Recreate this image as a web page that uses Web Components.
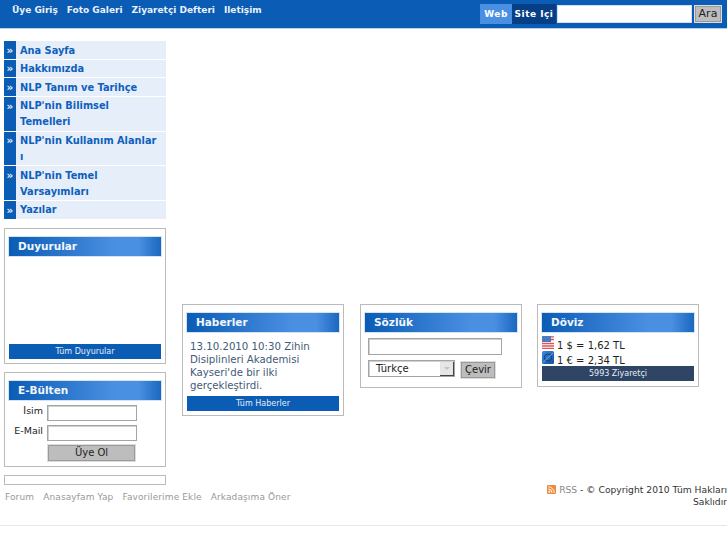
<!DOCTYPE html>
<html lang="tr">
<head>
<meta charset="utf-8">
<title>NLP</title>
<style>
  html, body { margin: 0; height: 545px; overflow: hidden; background: #fff; }
  body { font-family: "DejaVu Sans", sans-serif; font-size: 11px; color: #222; }
</style>
</head>
<body>
<x-page></x-page>

<script>
const boxInput = `
  input {
    box-sizing: border-box; display: block; margin: 0; padding: 1px 3px;
    border: 1px solid #a4a4a4; background: #fff; border-radius: 0;
    font: 10px "DejaVu Sans", sans-serif; outline: 0;
    box-shadow: inset 1px 1px 0 #d0d0d0;
  }
  .btn {
    box-sizing: border-box; display: block; margin: 0; padding: 0;
    background: #bdbdbd; border: 1px solid #ddd; outline: 1px solid #9a9a9a; outline-offset: -2px;
    color: #222; font: 10px "DejaVu Sans", sans-serif; text-align: center;
  }
`;

class XTopBar extends HTMLElement {
  constructor() {
    super();
    this.attachShadow({ mode: 'open' }).innerHTML = `
      <style>
        ${boxInput}
        :host { display: flex; box-sizing: border-box; height: 29px; background: #0a5cb5; border-bottom: 1px solid #b9cfe9; justify-content: space-between; }
        nav { display: flex; gap: 9px; padding: 4px 0 0 12px; }
        a { color: #eaf1fa; font-weight: bold; font-size: 9px; line-height: 13px; text-decoration: none; }
        form { display: flex; margin: 0 5px 0 0; padding-top: 4px; height: 20px; }
        .tab { box-sizing: border-box; height: 20px; line-height: 20px; font-weight: bold; font-size: 9px; letter-spacing: .5px; color: #fff; text-align: center; }
        .web { width: 32px; background: #4a90e2; }
        .site { width: 44px; background: #063f85; }
        input { width: 135px; height: 18px; margin: 1px 0 0 1px; box-shadow: none; border: 1px solid #d7e0ea; }
        .btn { width: 28px; height: 18px; margin: 1px 0 0 2px; line-height: 15px; font-size: 11px; }
      </style>
      <nav><a>Üye Giriş</a><a>Foto Galeri</a><a>Ziyaretçi Defteri</a><a>Iletişim</a></nav>
      <form><div class="tab web">Web</div><div class="tab site">Site Içi</div><input type="text"><div class="btn">Ara</div></form>
    `;
  }
}

class XMenuItem extends HTMLElement {
  constructor() {
    super();
    this.attachShadow({ mode: 'open' }).innerHTML = `
      <style>
        :host { display: flex; background: #e6eef9; }
        .mark { flex: none; width: 12px; background: #0a5cb5; color: #e6eef9; font-size: 10.5px; font-weight: bold; line-height: 16px; text-align: center; padding-top: .83px; }
        .label { padding: 1.5px 0 .16px 4px; color: #0d60bd; font-weight: bold; font-size: 9.8px; line-height: 16px; }
      </style>
      <div class="mark">»</div><div class="label"><slot></slot></div>
    `;
  }
}

class XSideMenu extends HTMLElement {
  constructor() {
    super();
    this.attachShadow({ mode: 'open' }).innerHTML = `
      <style>:host { display: flex; flex-direction: column; gap: 1px; }</style>
      <slot></slot>
    `;
  }
}

class XPanel extends HTMLElement {
  constructor() {
    super();
    this.attachShadow({ mode: 'open' }).innerHTML = `
      <style>
        :host { display: block; box-sizing: border-box; border: 1px solid #bbb; padding: 7px 4px 4px; background: #fff; }
        h3 {
          margin: 0 -1px; box-sizing: border-box; height: 21px; padding-left: 9px; line-height: 19px;
          border: 1px solid #d5e3f5; color: #f2f6fb; font-size: 10.5px; font-weight: bold;
          background: linear-gradient(90deg, #0a5cb5 0%, #4a90e2 70%, #4a90e2 85%, #1a68c0 100%);
        }
      </style>
      <h3>${this.getAttribute('heading') || ''}</h3>
      <slot></slot>
    `;
  }
}

class XMoreBar extends HTMLElement {
  constructor() {
    super();
    this.attachShadow({ mode: 'open' }).innerHTML = `
      <style>
        :host { display: block; height: 15px; background: var(--bar, #0a5cb5); color: #e8eef7; font-size: 8px; line-height: 15px; text-align: center; }
      </style>
      <slot></slot>
    `;
  }
}

class XNewsletter extends HTMLElement {
  constructor() {
    super();
    this.attachShadow({ mode: 'open' }).innerHTML = `
      <style>
        ${boxInput}
        :host { display: grid; grid-template-columns: 34px 90px; column-gap: 4px; row-gap: 4px; padding-top: 4px; font-size: 9.5px; color: #222; }
        label { text-align: right; line-height: 13px; white-space: nowrap; margin-top: -1px; }
        input { width: 90px; height: 16px; }
        .btn { grid-column: 2; width: 89px; height: 18px; line-height: 16px; margin-top: -1px; }
      </style>
      <label>İsim</label><input type="text">
      <label>E-Mail</label><input type="text">
      <div class="btn">Üye Ol</div>
    `;
  }
}

class XDictionary extends HTMLElement {
  constructor() {
    super();
    this.attachShadow({ mode: 'open' }).innerHTML = `
      <style>
        ${boxInput}
        :host { display: flex; flex-wrap: wrap; gap: 5px; padding: 5px 3px 0; }
        input { width: 134px; height: 17px; flex: none; }
        .select { position: relative; box-sizing: border-box; width: 87px; height: 17px; border: 1px solid #a4a4a4; box-shadow: inset 1px 1px 0 #d0d0d0; padding-left: 7px; font-size: 10px; line-height: 15px; }
        .arrow { position: absolute; right: 0; top: 1px; width: 14px; height: 14px; background: #e6e6e6; border-right: 1px solid #444; border-bottom: 1px solid #444; box-sizing: border-box; }
        .arrow::after { content: ""; position: absolute; left: 4px; top: 5px; border: 3px solid transparent; border-top: 3px solid #c4c4c4; }
        .btn { width: 36px; height: 18px; line-height: 16px; margin-top: 1px; }
      </style>
      <input type="text">
      <div class="select">Türkçe<span class="arrow"></span></div>
      <div class="btn">Çevir</div>
    `;
  }
}

class XRate extends HTMLElement {
  constructor() {
    super();
    this.attachShadow({ mode: 'open' }).innerHTML = `
      <style>
        :host { display: flex; gap: 3px; height: 15px; font-size: 10px; line-height: 15px; color: #222; }
        .t { padding-top: 2px; }
        ::slotted(svg) { flex: none; }
      </style>
      <slot name="flag"></slot><div class="t"><slot></slot></div>
    `;
  }
}

class XFooter extends HTMLElement {
  constructor() {
    super();
    this.attachShadow({ mode: 'open' }).innerHTML = `
      <style>
        :host { display: block; box-sizing: border-box; }
        .links { display: flex; gap: 9px; color: #999; font-size: 9px; letter-spacing: .12px; line-height: 11px; }
      </style>
      <div class="links"><span>Forum</span><span>Anasayfam Yap</span><span>Favorilerime Ekle</span><span>Arkadaşıma Öner</span></div>
    `;
  }
}

class XPage extends HTMLElement {
  constructor() {
    super();
    this.attachShadow({ mode: 'open' }).innerHTML = `
      <style>
        :host { display: block; position: relative; width: 727px; height: 545px; overflow: hidden; }
        .main { display: flex; padding: 12px 0 0 4px; }
        .left { flex: none; width: 162px; display: flex; flex-direction: column; }
        x-side-menu { margin-bottom: 9px; }
        .duyuru { height: 136px; display: flex; flex-direction: column; }
        .spacer { height: 87px; }
        .bulten { margin-top: 8px; height: 95px; }
        .empty { margin-top: 8px; height: 10px; border: 1px solid #bbb; box-sizing: border-box; }
        x-footer { margin: 7px 0 0 1px; white-space: nowrap; }
        .center { display: flex; align-items: flex-start; padding: 263px 0 0 16px; gap: 16px; }
        .haber { width: 162px; height: 112px; }
        .sozluk { width: 162px; height: 84px; }
        .doviz { width: 162px; height: 83px; margin-left: -1px; }
        .news { font-size: 10.2px; line-height: 13px; color: #445a78; padding: 7px 3px 0; height: 56px; white-space: nowrap; }
        .rates { padding-top: 3px; }
        .copy { position: absolute; right: 0; top: 484px; width: 200px; text-align: right; font-size: 9.2px; line-height: 12px; color: #333; }
        .copy span { color: #888; }
        .copy svg { vertical-align: -1px; }
        .rule { position: absolute; left: 0; right: 0; top: 525px; height: 1px; background: #e8e8e8; }
      </style>
      <x-top-bar></x-top-bar>
      <div class="main">
        <div class="left">
          <x-side-menu>
            <x-menu-item>Ana Sayfa</x-menu-item>
            <x-menu-item>Hakkımızda</x-menu-item>
            <x-menu-item>NLP Tanım ve Tarihçe</x-menu-item>
            <x-menu-item>NLP'nin Bilimsel<br>Temelleri</x-menu-item>
            <x-menu-item>NLP'nin Kullanım Alanlar<br>ı</x-menu-item>
            <x-menu-item>NLP'nin Temel<br>Varsayımları</x-menu-item>
            <x-menu-item>Yazılar</x-menu-item>
          </x-side-menu>
          <x-panel class="duyuru" heading="Duyurular">
            <div class="spacer"></div>
            <x-more-bar>Tüm Duyurular</x-more-bar>
          </x-panel>
          <x-panel class="bulten" heading="E-Bülten"><x-newsletter></x-newsletter></x-panel>
          <div class="empty"></div>
          <x-footer></x-footer>
        </div>
        <div class="center">
          <x-panel class="haber" heading="Haberler">
            <div class="news">13.10.2010 10:30 Zihin<br>Disiplinleri Akademisi<br>Kayseri'de bir ilki<br>gerçekleştirdi.</div>
            <x-more-bar>Tüm Haberler</x-more-bar>
          </x-panel>
          <x-panel class="sozluk" heading="Sözlük"><x-dictionary></x-dictionary></x-panel>
          <x-panel class="doviz" heading="Döviz">
            <div class="rates">
              <x-rate>
                <svg slot="flag" width="12" height="13" viewBox="0 0 12 13"><rect width="12" height="13" fill="#fff"/><path d="M0 .8h12M0 3.5h12M0 7.5h12M0 10h12M0 12.4h12" stroke="#e0555a" stroke-width="1.3"/><rect width="9" height="6" fill="#4c7cc0"/></svg>
                1 $ = 1,62 TL
              </x-rate>
              <x-rate>
                <svg slot="flag" width="12" height="13" viewBox="0 0 12 13"><defs><linearGradient id="eu" x1="0" y1="0" x2="1" y2="1"><stop offset="0" stop-color="#3f8ae0"/><stop offset="1" stop-color="#12509f"/></linearGradient></defs><rect width="12" height="13" rx="1.5" fill="url(#eu)"/><circle cx="6" cy="6.5" r="3.6" fill="none" stroke="#0e3f80" stroke-width="1"/><path d="M1 11.5 11 2" stroke="#8fbbec" stroke-width=".7"/></svg>
                1 € = 2,34 TL
              </x-rate>
            </div>
            <x-more-bar style="--bar:#2f4565">5993 Ziyaretçi</x-more-bar>
          </x-panel>
        </div>
      </div>
      <div class="copy">
        <svg width="9" height="9" viewBox="0 0 9 9"><rect width="9" height="9" rx="1" fill="#f08a3c"/><circle cx="2.3" cy="6.7" r="1" fill="#fff"/><path d="M1.3 4a3.7 3.7 0 0 1 3.7 3.7M1.3 1.8a5.9 5.9 0 0 1 5.9 5.9" fill="none" stroke="#fff" stroke-width="1"/></svg>
        <span>RSS</span> - © Copyright 2010 Tüm Hakları Saklıdır
      </div>
      <div class="rule"></div>
    `;
  }
}

customElements.define('x-top-bar', XTopBar);
customElements.define('x-menu-item', XMenuItem);
customElements.define('x-side-menu', XSideMenu);
customElements.define('x-panel', XPanel);
customElements.define('x-more-bar', XMoreBar);
customElements.define('x-newsletter', XNewsletter);
customElements.define('x-dictionary', XDictionary);
customElements.define('x-rate', XRate);
customElements.define('x-footer', XFooter);
customElements.define('x-page', XPage);
</script>
</body>
</html>
